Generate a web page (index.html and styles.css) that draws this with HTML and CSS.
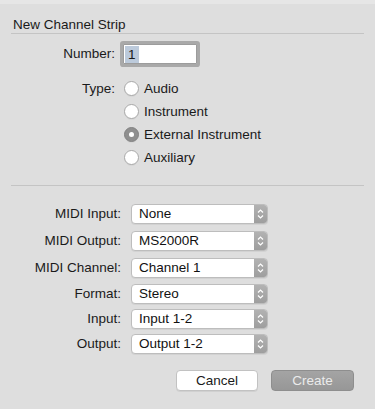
FILE: index.html
```html
<!DOCTYPE html>
<html lang="en">

<head>
  <meta charset="UTF-8">
  <meta name="viewport" content="width=device-width, initial-scale=1.0">
  <title>New Channel Strip</title>
  <link rel="stylesheet" href="styles.css">
</head>

<body>
  <div class="dialog">
    <h1 class="section-title">New Channel Strip</h1>

    <div class="form-top">
      <span class="field-label number-label">Number:</span>
      <div class="number-wrap">
        <div class="number-field"><span class="selected-text">1</span></div>
      </div>

      <span class="field-label type-label">Type:</span>
      <div class="radio-list">
        <div class="radio-row"><span class="radio"></span>Audio</div>
        <div class="radio-row"><span class="radio"></span>Instrument</div>
        <div class="radio-row"><span class="radio checked"></span>External Instrument</div>
        <div class="radio-row"><span class="radio"></span>Auxiliary</div>
      </div>
    </div>

    <div class="divider"></div>

    <div class="form-bottom">
      <span class="field-label">MIDI Input:</span>
      <div class="popup"><span class="popup-text">None</span><span class="popup-arrows"><svg width="13" height="18" viewBox="0 0 13 18"><path d="M4 7.5 L6.5 5 L9 7.5 M4 10.5 L6.5 13 L9 10.5" fill="none" stroke="#fff" stroke-width="1.2"/></svg></span></div>

      <span class="field-label">MIDI Output:</span>
      <div class="popup"><span class="popup-text">MS2000R</span><span class="popup-arrows"><svg width="13" height="18" viewBox="0 0 13 18"><path d="M4 7.5 L6.5 5 L9 7.5 M4 10.5 L6.5 13 L9 10.5" fill="none" stroke="#fff" stroke-width="1.2"/></svg></span></div>

      <span class="field-label">MIDI Channel:</span>
      <div class="popup"><span class="popup-text">Channel 1</span><span class="popup-arrows"><svg width="13" height="18" viewBox="0 0 13 18"><path d="M4 7.5 L6.5 5 L9 7.5 M4 10.5 L6.5 13 L9 10.5" fill="none" stroke="#fff" stroke-width="1.2"/></svg></span></div>

      <span class="field-label">Format:</span>
      <div class="popup"><span class="popup-text">Stereo</span><span class="popup-arrows"><svg width="13" height="18" viewBox="0 0 13 18"><path d="M4 7.5 L6.5 5 L9 7.5 M4 10.5 L6.5 13 L9 10.5" fill="none" stroke="#fff" stroke-width="1.2"/></svg></span></div>

      <span class="field-label">Input:</span>
      <div class="popup"><span class="popup-text">Input 1-2</span><span class="popup-arrows"><svg width="13" height="18" viewBox="0 0 13 18"><path d="M4 7.5 L6.5 5 L9 7.5 M4 10.5 L6.5 13 L9 10.5" fill="none" stroke="#fff" stroke-width="1.2"/></svg></span></div>

      <span class="field-label">Output:</span>
      <div class="popup"><span class="popup-text">Output 1-2</span><span class="popup-arrows"><svg width="13" height="18" viewBox="0 0 13 18"><path d="M4 7.5 L6.5 5 L9 7.5 M4 10.5 L6.5 13 L9 10.5" fill="none" stroke="#fff" stroke-width="1.2"/></svg></span></div>
    </div>

    <div class="buttons">
      <button class="btn btn-cancel">Cancel</button>
      <button class="btn btn-create">Create</button>
    </div>
  </div>
</body>

</html>
```

FILE: styles.css
```css
body {
  margin: 0;
  background: #dedede;
  font-family: "Liberation Sans", Arial, sans-serif;
  font-size: 13.5px;
  color: #1a1a1a;
}

.dialog {
  width: 375px;
  height: 409px;
  box-sizing: border-box;
  border-top: 4px solid #e6e6e6;
}

.section-title {
  margin: 0 11px;
  padding: 13px 0 0 2px;
  height: 16px;
  line-height: 16px;
  font-size: 13.5px;
  font-weight: normal;
  border-bottom: 1px solid #c4c4c4;
}

.form-top {
  display: grid;
  grid-template-columns: 115px 1fr;
  column-gap: 8px;
  margin-top: 7px;
}

.field-label {
  text-align: right;
  white-space: nowrap;
}

.number-label {
  line-height: 26px;
}

.number-wrap {
  padding: 3px 0;
}

.number-field {
  width: 74px;
  height: 20px;
  box-sizing: border-box;
  background: #fff;
  border: 1px solid #9c9c9c;
  box-shadow: 0 0 0 3px #a9a9a9;
  border-radius: 1px;
  padding: 1px 0 0 1px;
  line-height: 17px;
}

.selected-text {
  display: inline-block;
  padding: 0 3px;
  background: #bccadb;
}

.type-label {
  margin-top: 10px;
  line-height: 23px;
}

.radio-list {
  margin-top: 10px;
}

.radio-row {
  display: flex;
  align-items: center;
  height: 23px;
  padding-left: 1px;
}

.radio {
  width: 15px;
  height: 15px;
  box-sizing: border-box;
  margin-right: 5px;
  border-radius: 50%;
  border: 1px solid #a8a8a8;
  background: #fff;
  box-shadow: 0 1px 0 rgba(0, 0, 0, 0.04);
  display: flex;
  align-items: center;
  justify-content: center;
}

.radio.checked {
  background: #8f8f8f;
  border-color: #828282;
}

.radio.checked::after {
  content: "";
  width: 5px;
  height: 5px;
  border-radius: 50%;
  background: #fff;
}

.divider {
  margin: 16px 11px 0;
  height: 1px;
  background: #c4c4c4;
}

.form-bottom {
  display: grid;
  grid-template-columns: 121px 137px;
  grid-template-rows: 27px 27px 26px 25px 25px 20px;
  column-gap: 10px;
  align-items: start;
  margin-top: 18px;
}

.form-bottom .field-label {
  line-height: 20px;
}

.popup {
  display: flex;
  height: 20px;
  box-sizing: border-box;
  background: #fff;
  border: 1px solid #bdbdbd;
  border-radius: 4px;
  box-shadow: 0 1px 0 rgba(0, 0, 0, 0.05);
}

.popup-text {
  flex: 1;
  padding-left: 7px;
  line-height: 18px;
  color: #111;
}

.popup-arrows {
  width: 13px;
  height: 18px;
  background: linear-gradient(#b2b2b2, #9e9e9e);
  border-radius: 0 3px 3px 0;
}

.popup-arrows svg {
  display: block;
}

.buttons {
  display: flex;
  justify-content: flex-end;
  gap: 13px;
  margin-top: 16px;
  padding-right: 21px;
}

.btn {
  height: 21px;
  box-sizing: border-box;
  border-radius: 4px;
  font-family: inherit;
  font-size: 13.5px;
  line-height: 18px;
  padding: 0;
}

.btn-cancel {
  width: 82px;
  background: #fff;
  color: #1a1a1a;
  border: 1px solid #c2c2c2;
  box-shadow: 0 1px 0 rgba(0, 0, 0, 0.06);
}

.btn-create {
  width: 83px;
  background: linear-gradient(#a4a4a4, #979797);
  color: #ebebeb;
  border: 1px solid #8e8e8e;
}
```
